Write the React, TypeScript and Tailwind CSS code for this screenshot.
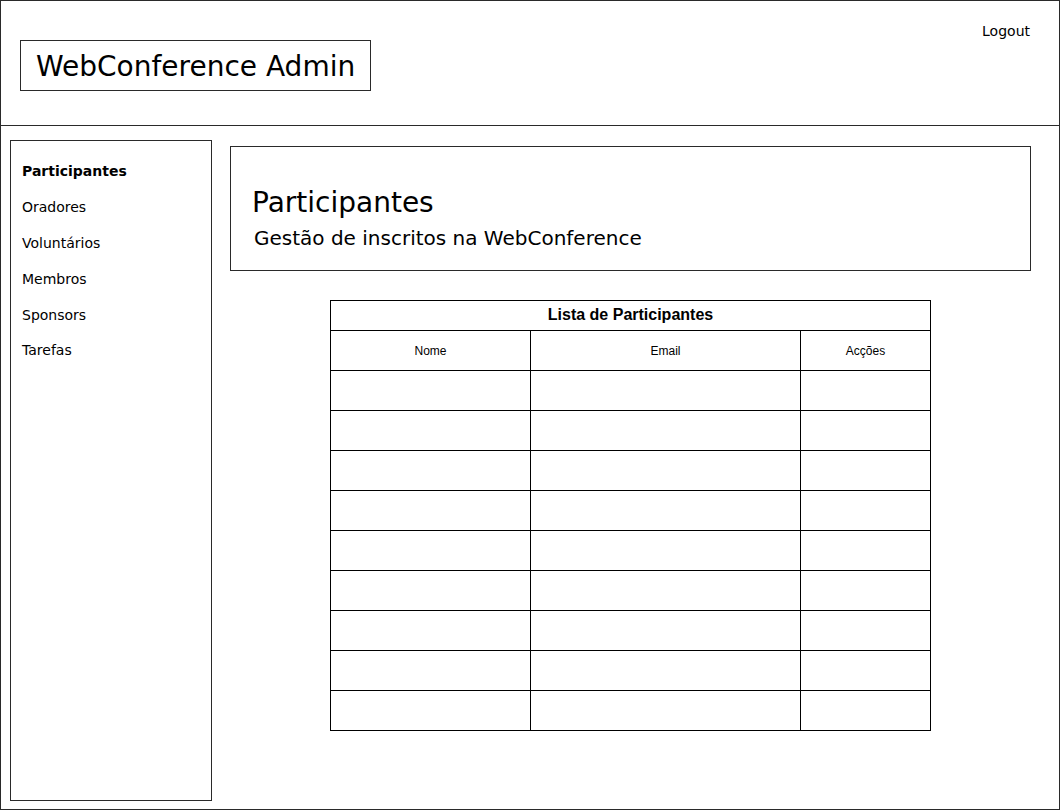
import React from 'react'

const navItems = ['Participantes', 'Oradores', 'Voluntários', 'Membros', 'Sponsors', 'Tarefas']

export default function App() {
  const rows = Array.from({ length: 9 })

  return (
    <div className="w-[1061px] h-[811px] bg-white font-['DejaVu_Sans',sans-serif] text-black">
      <div className="w-[1060px] h-[810px] border border-[#2a2a2a] flex flex-col">
        {/* header */}
        <div className="h-[125px] shrink-0 border-b border-[#2a2a2a] flex justify-between">
          <div className="pl-[19px] pt-[39px]">
            <div className="w-[351px] h-[51px] border border-[#2a2a2a] flex items-center pl-[15px] pt-[2px] text-[28px] leading-none">
              WebConference Admin
            </div>
          </div>
          <div className="pr-[29px] pt-[21px] text-[14px] leading-[18px]">Logout</div>
        </div>

        <div className="flex flex-1">
          {/* sidebar */}
          <div className="pl-[9px] pt-[14px] pb-[8px]">
            <div className="w-[202px] h-full border border-[#2a2a2a] pt-[13px] pl-[11px]">
              {navItems.map((item, i) => (
                <div
                  key={item}
                  className={`h-[35.8px] flex items-center text-[14px] ${i === 0 ? 'font-bold' : ''}`}
                >
                  {item}
                </div>
              ))}
            </div>
          </div>

          {/* main */}
          <div className="pl-[18px] pt-[20px] flex flex-col">
            <div className="w-[801px] h-[125px] border border-[#2a2a2a] pl-[21px] pt-[39px]">
              <div className="text-[28px] leading-[34px]">Participantes</div>
              <div className="text-[20px] leading-[28px] mt-[4px] pl-[2px]">Gestão de inscritos na WebConference</div>
            </div>

            <div className="pl-[100px] pt-[29px]">
              <table className="border-collapse font-['Liberation_Sans',Arial,sans-serif] text-center">
                <thead>
                  <tr>
                    <th colSpan={3} className="h-[30px] pb-[1px] border border-black text-[16px] font-bold">
                      Lista de Participantes
                    </th>
                  </tr>
                  <tr>
                    <th className="w-[200px] h-[40px] border border-black text-[12px] font-normal">Nome</th>
                    <th className="w-[270px] h-[40px] border border-black text-[12px] font-normal">Email</th>
                    <th className="w-[130px] h-[40px] border border-black text-[12px] font-normal">Acções</th>
                  </tr>
                </thead>
                <tbody>
                  {rows.map((_, i) => (
                    <tr key={i}>
                      <td className="h-[40px] border border-black"></td>
                      <td className="h-[40px] border border-black"></td>
                      <td className="h-[40px] border border-black"></td>
                    </tr>
                  ))}
                </tbody>
              </table>
            </div>
          </div>
        </div>
      </div>
    </div>
  )
}
